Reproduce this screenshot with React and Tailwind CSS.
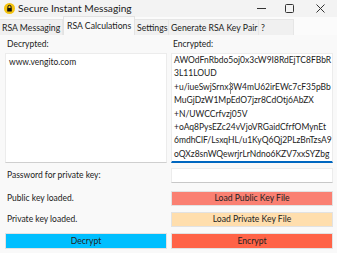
import React from 'react';

const encryptedLines = [
  'AWOdFnRbdo5oj0x3cW9I8RdEjTC8FBbR',
  '3L11LOUD',
  '+u/iueSwjSrnx3W4mU62irEWc7cF35pBb',
  'MuGjDzW1MpEdO7jzr8CdOtj6AbZX',
  '+N/UWCCrfvzj05V',
  '+oAq8PysEZc24vVjoVRGaidCfrfOMynEt',
  '6mdhClF/LsxqHL/u1KyQ6Qj2PLzBnTzsA9',
  'oQXz8snWQewrjrLrNdno6KZV7xxSYZbg',
  'c',
];

const tabs = [
  { label: 'RSA Messaging', w: 'w-[63px]' },
  { label: 'RSA Calculations', w: 'w-[72px]', active: true },
  { label: 'Settings', w: 'w-[34px]' },
  { label: 'Generate RSA Key Pair', w: 'w-[90px]' },
  { label: '?', w: 'w-[35px]' },
];

const LockIcon = () => (
  <svg width="11" height="11" viewBox="0 0 11 11">
    <circle cx="5.5" cy="5.5" r="5.5" fill="#f4c20d" />
    <path d="M3.9 5V3.9a1.6 1.6 0 0 1 3.2 0V5" fill="none" stroke="#111" strokeWidth="1" />
    <rect x="3.2" y="5" width="4.6" height="3.4" rx="0.5" fill="#111" />
  </svg>
);

const TitleBar = () => (
  <div className="h-[17px] flex items-center bg-[#f3f3f3]">
    <div className="pl-[4px] pr-[3px] flex items-center">
      <LockIcon />
    </div>
    <span className="text-[10.2px] text-[#1b1b1b]">Secure Instant Messaging</span>
    <div className="ml-auto flex items-center h-full">
      <div className="w-[28px] flex justify-center">
        <svg width="9" height="9" viewBox="0 0 9 9"><path d="M0 4.5h9" stroke="#333" strokeWidth="1" /></svg>
      </div>
      <div className="w-[28px] flex justify-center">
        <svg width="9" height="9" viewBox="0 0 9 9"><rect x="0.5" y="0.5" width="8" height="8" rx="1" fill="none" stroke="#333" strokeWidth="1" /></svg>
      </div>
      <div className="w-[34px] flex justify-center">
        <svg width="9" height="9" viewBox="0 0 9 9"><path d="M0.5 0.5l8 8M8.5 0.5l-8 8" stroke="#333" strokeWidth="1" /></svg>
      </div>
    </div>
  </div>
);

const TabStrip = () => (
  <div className="h-[18px] flex items-end bg-[#fbfbfb]">
    {tabs.map((t) =>
      t.active ? (
        <div
          key={t.label}
          className={`${t.w} h-[19px] -mt-[1px] flex items-center pl-[3px] bg-[#f9f9f9] border border-b-0 border-[#e3e3e3] text-[8.7px] text-[#1b1b1b] whitespace-nowrap overflow-hidden`}
        >
          {t.label}
        </div>
      ) : (
        <div
          key={t.label}
          className={`${t.w} h-[16px] flex items-center pl-[2px] bg-[#f0f0f0] border-r border-t border-[#e6e6e6] text-[8.7px] text-[#1b1b1b] whitespace-nowrap overflow-hidden`}
        >
          {t.label}
        </div>
      )
    )}
  </div>
);

const Btn = ({ children, color, h = 'h-[15px]' }) => (
  <div className={`${h} border-[1.5px] border-[#e2e2e2] flex`}>
    <div className={`flex-1 ${color} flex items-center justify-center text-[8.6px] text-[#222]`}>
      {children}
    </div>
  </div>
);

export default function App() {
  return (
    <div
      className="w-[337px] h-[253px] overflow-hidden bg-white flex flex-col"
      style={{ fontFamily: 'Lato, "Noto Sans", sans-serif' }}
    >
      <TitleBar />
      <TabStrip />
      <div className="flex-1 bg-[#f9f9f9] pl-[5px] pr-[4px] grid grid-cols-[162px_162px] gap-x-[4px] content-start text-[8.5px] text-[#1b1b1b]">
        <div className="h-[18px] flex items-center pl-[2px]">Decrypted:</div>
        <div className="h-[18px] flex items-center pl-[2px]">Encrypted:</div>

        <div className="h-[110px] bg-white border border-[#ececec] border-b-[#cfcfcf] px-[3px] pt-[2px] leading-[13.6px]">
          www.vengito.com
        </div>
        <div className="h-[110px] bg-white border border-[#ececec] border-b-2 border-b-[#0067c0] px-[2px] leading-[13.4px] overflow-hidden relative">
          {encryptedLines.map((l, i) => (
            <div key={i} className="whitespace-nowrap">{l}</div>
          ))}
          <div className="absolute left-[58px] top-[28px] w-[1px] h-[12px] bg-[#888]" />
        </div>

        <div className="mt-[5px] h-[15px] flex items-center pl-[2px]">Password for private key:</div>
        <div className="mt-[5px] h-[15px] bg-white border border-[#ececec] border-b-[#c8c8c8]" />

        <div className="mt-[8px] h-[15px] flex items-center pl-[2px]">Public key loaded.</div>
        <div className="mt-[8px]"><Btn color="bg-[#fa8072]">Load Public Key File</Btn></div>

        <div className="mt-[6px] h-[15px] flex items-center pl-[2px]">Private key loaded.</div>
        <div className="mt-[6px]"><Btn color="bg-[#ffdead]">Load Private Key File</Btn></div>

        <div className="mt-[6px]"><Btn color="bg-[#00bfff]" h="h-[16px]">Decrypt</Btn></div>
        <div className="mt-[6px]"><Btn color="bg-[#ff6347]" h="h-[16px]">Encrypt</Btn></div>
      </div>
    </div>
  );
}
